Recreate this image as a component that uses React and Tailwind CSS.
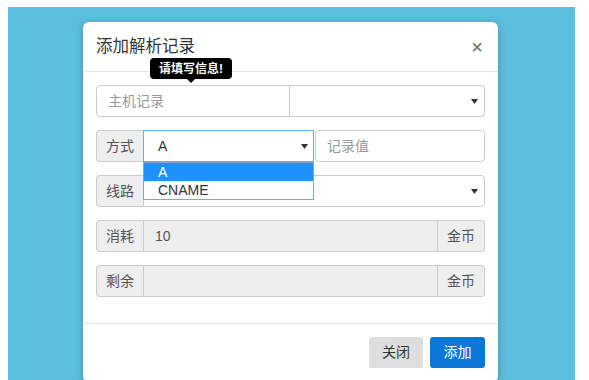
import React from "react";

const font = { fontFamily: '"Liberation Sans", "Noto Sans CJK SC", sans-serif' };

function Caret() {
  return (
    <svg width="7" height="5" viewBox="0 0 7 5" className="shrink-0">
      <path d="M0 0 L7 0 L3.5 5 Z" fill="#333" />
    </svg>
  );
}

function Addon({ children, side = "left" }) {
  return (
    <div
      className={`w-[47px] shrink-0 flex items-center justify-center bg-[#eeeeee] border border-[#cccccc] text-[14px] text-[#555] ${
        side === "left" ? "rounded-l-[4px] border-r-0" : "rounded-r-[4px] border-l-0"
      }`}
    >
      {children}
    </div>
  );
}

export default function App() {
  return (
    <div className="w-[589px] h-[380px] bg-white overflow-hidden pt-[7px] pl-[8px]" style={font}>
      <div className="w-[567px] h-[373px] bg-[#5bc0de] pt-[15px] pl-[75px]">
        <div className="w-[415px] h-[360px] bg-white rounded-[6px] shadow-[0_2px_8px_rgba(0,0,0,0.25)] flex flex-col">
          {/* header */}
          <div className="h-[50px] shrink-0 flex items-center justify-between px-[13px] border-b border-[#e5e5e5]">
            <span className="text-[16.5px] text-[#333]">添加解析记录</span>
            <span className="text-[#666] text-[20px] leading-none font-light mr-[2px]">×</span>
          </div>

          {/* body */}
          <div className="flex flex-col gap-[13px] px-[13px] pt-[13px] pb-[26px] border-b border-[#e5e5e5]">
            {/* row 1 */}
            <div className="relative flex h-[32px]">
              <div className="absolute left-[54px] -top-[27px] flex flex-col items-center">
                <div className="bg-black text-white text-[12px] font-bold rounded-[4px] px-[9px] h-[21px] flex items-center whitespace-nowrap">
                  请填写信息!
                </div>
                <div className="w-0 h-0 border-l-[4px] border-r-[4px] border-t-[4px] border-l-transparent border-r-transparent border-t-black" />
              </div>
              <div className="w-[194px] border border-[#cccccc] rounded-l-[4px] flex items-center pl-[11px] text-[14px] text-[#999]">
                主机记录
              </div>
              <div className="flex-1 border border-l-0 border-[#cccccc] rounded-r-[4px] flex items-center justify-end pr-[6px]">
                <Caret />
              </div>
            </div>

            {/* row 2 */}
            <div className="relative flex h-[32px]">
              <Addon>方式</Addon>
              <div className="relative w-[171px] border border-[#66afe9] flex items-center justify-between pl-[14px] pr-[5px] text-[14px] text-[#333]">
                A
                <Caret />
                <div className="absolute left-[-1px] top-[31px] w-[171px] bg-white border border-[#7aa7d6] z-10 text-[14px]">
                  <div className="h-[18px] bg-[#1e90ff] text-white pl-[14px] flex items-center">A</div>
                  <div className="h-[18px] text-[#333] pl-[14px] flex items-center">CNAME</div>
                </div>
              </div>
              <div className="flex-1 ml-[1px] border border-[#cccccc] rounded-[4px] flex items-center pl-[11px] text-[14px] text-[#999]">
                记录值
              </div>
            </div>

            {/* row 3 */}
            <div className="flex h-[32px]">
              <Addon>线路</Addon>
              <div className="flex-1 border border-[#cccccc] rounded-r-[4px] flex items-center justify-end pr-[6px]">
                <Caret />
              </div>
            </div>

            {/* row 4 */}
            <div className="flex h-[32px]">
              <Addon>消耗</Addon>
              <div className="flex-1 bg-[#eeeeee] border border-[#cccccc] flex items-center pl-[11px] text-[14px] text-[#555]">
                10
              </div>
              <Addon side="right">金币</Addon>
            </div>

            {/* row 5 */}
            <div className="flex h-[32px]">
              <Addon>剩余</Addon>
              <div className="flex-1 bg-[#eeeeee] border border-[#cccccc]" />
              <Addon side="right">金币</Addon>
            </div>
          </div>

          {/* footer */}
          <div className="flex justify-end gap-[7px] px-[13px] pt-[13px]">
            <button className="w-[54px] h-[31px] rounded-[3px] bg-[#dedede] text-[#333] text-[14px]">关闭</button>
            <button className="w-[55px] h-[31px] rounded-[3px] bg-[#0b78d8] text-white text-[14px]">添加</button>
          </div>
        </div>
      </div>
    </div>
  );
}
